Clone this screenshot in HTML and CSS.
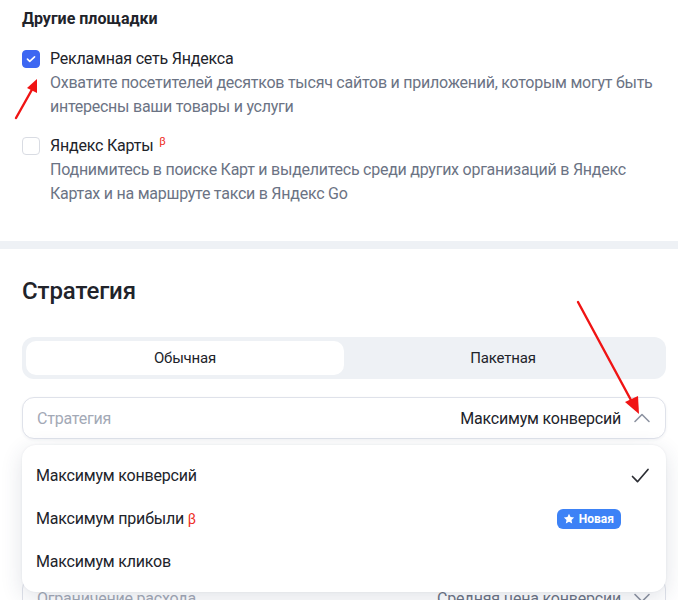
FILE: index.html
```html
<!DOCTYPE html>
<html lang="ru">
<head>
<meta charset="utf-8">
<title>Стратегия</title>
<link rel="stylesheet" href="styles.css">
</head>
<body>
<div class="page">
  <section class="placements">
    <h3 class="placements-title">Другие площадки</h3>
    <div class="option-list">
      <label class="option">
        <span class="checkbox checkbox-on">
          <svg viewBox="0 0 18 18" width="18" height="18"><path d="M5 9.2l2.6 2.5L13 6.6" fill="none" stroke="#fff" stroke-width="1.8" stroke-linecap="round" stroke-linejoin="round"/></svg>
        </span>
        <span class="option-body">
          <span class="option-name">Рекламная сеть Яндекса</span>
          <span class="option-desc">Охватите посетителей десятков тысяч сайтов и приложений, которым могут быть интересны ваши товары и услуги</span>
        </span>
      </label>
      <label class="option">
        <span class="checkbox"></span>
        <span class="option-body">
          <span class="option-name">Яндекс Карты <sup class="beta">β</sup></span>
          <span class="option-desc">Поднимитесь в поиске Карт и выделитесь среди других организаций в Яндекс Картах и на маршруте такси в Яндекс Go</span>
        </span>
      </label>
    </div>
  </section>

  <div class="band"></div>

  <section class="strategy">
    <h2 class="strategy-title">Стратегия</h2>
    <div class="segmented">
      <div class="segment segment-active">Обычная</div>
      <div class="segment">Пакетная</div>
    </div>

    <div class="fields">
      <div class="select-wrap">
        <div class="select select-open">
          <span class="select-label">Стратегия</span>
          <span class="select-value">Максимум конверсий</span>
          <svg class="chevron" viewBox="0 0 18 18" width="18" height="18"><path d="M2 12.5L9 5.5l7 7" fill="none" stroke="#8d93a1" stroke-width="1.6" stroke-linecap="round" stroke-linejoin="round"/></svg>
        </div>
        <ul class="menu">
          <li class="menu-item">
            <span>Максимум конверсий</span>
            <svg class="check" viewBox="0 0 20 20" width="20" height="20"><path d="M2.5 10.5l5 5.2L18 3.5" fill="none" stroke="#2b2d33" stroke-width="1.7" stroke-linecap="round" stroke-linejoin="round"/></svg>
          </li>
          <li class="menu-item">
            <span>Максимум прибыли <span class="beta-inline">β</span></span>
            <span class="badge">
              <svg viewBox="0 0 12 12" width="12" height="12"><path d="M6 .8l1.55 3.3 3.6.42-2.66 2.47.7 3.56L6 8.78 2.81 10.55l.7-3.56L.85 4.52l3.6-.42z" fill="#fff"/></svg>
              Новая
            </span>
          </li>
          <li class="menu-item">
            <span>Максимум кликов</span>
          </li>
        </ul>
      </div>
      <div class="select select-muted">
        <span class="select-label">Ограничение расхода</span>
        <span class="select-value">Средняя цена конверсии</span>
        <svg class="chevron" viewBox="0 0 18 18" width="18" height="18"><path d="M2 5.5l7 7 7-7" fill="none" stroke="#8d93a1" stroke-width="1.6" stroke-linecap="round" stroke-linejoin="round"/></svg>
      </div>
    </div>
  </section>

  <!-- annotation arrows drawn over the form -->
  <svg class="pointer pointer-left" viewBox="0 0 40 50" width="40" height="50">
    <path d="M6 46L24 14" stroke="#f01414" stroke-width="2.4" stroke-linecap="round"/>
    <path d="M27 7L17 16l10 5z" fill="#f01414"/>
  </svg>
  <svg class="pointer pointer-right" viewBox="0 0 80 120" width="80" height="120">
    <path d="M8 4L62 104" stroke="#f01414" stroke-width="2.4" stroke-linecap="round"/>
    <path d="M69 116L55 104l13-6z" fill="#f01414"/>
  </svg>
</div>
</body>
</html>
```

FILE: styles.css
```css
* {
  box-sizing: border-box;
}

html, body {
  margin: 0;
  padding: 0;
  background: #fff;
}

body {
  font-family: Roboto, "Noto Sans", "Liberation Sans", sans-serif;
  color: #21232a;
  letter-spacing: -0.2px;
  overflow: hidden;
}

.page {
  position: relative;
  width: 678px;
  height: 600px;
  overflow: hidden;
}

/* ---- other placements ---- */
.placements {
  padding: 9px 22px 35px;
}

.placements-title {
  margin: 0;
  font-size: 16px;
  line-height: 20px;
  font-weight: 700;
  letter-spacing: 0;
  color: #21232a;
}

.option-list {
  display: flex;
  flex-direction: column;
  gap: 14px;
  margin-top: 17px;
}

.option {
  display: flex;
  gap: 10px;
  align-items: flex-start;
}

.checkbox {
  flex: none;
  width: 18px;
  height: 18px;
  margin-top: 4px;
  border-radius: 4px;
  border: 1px solid #d9dce3;
  background: #fff;
  display: flex;
  align-items: center;
  justify-content: center;
}

.checkbox-on {
  background: #3d67f2;
  border-color: #3d67f2;
}

.checkbox-on svg {
  display: block;
}

.option-body {
  display: flex;
  flex-direction: column;
  padding-top: 1px;
}

.option-name {
  font-size: 16px;
  line-height: 24px;
  color: #21232a;
}

.option-desc {
  font-size: 16px;
  line-height: 24px;
  letter-spacing: -0.25px;
  color: #6b7384;
}

.beta {
  color: #ee2a22;
  font-size: 11px;
  vertical-align: 6px;
  line-height: 0;
  margin-left: 2px;
}

/* ---- grey divider ---- */
.band {
  height: 8px;
  background: #eef1f5;
}

/* ---- strategy ---- */
.strategy {
  padding: 28px 12px 0 22px;
}

.strategy-title {
  margin: 0 0 32px;
  font-size: 24px;
  line-height: 28px;
  font-weight: 500;
  letter-spacing: -0.1px;
  color: #21232a;
}

.segmented {
  display: grid;
  grid-template-columns: 1fr 1fr;
  padding: 4px;
  height: 42px;
  border-radius: 12px;
  background: #eef1f5;
}

.segment {
  display: flex;
  align-items: center;
  justify-content: center;
  border-radius: 10px;
  font-size: 15px;
  color: #21232a;
}

.segment-active {
  background: #fff;
}

.fields {
  display: flex;
  flex-direction: column;
  gap: 138px;
  margin-top: 18px;
}

.select-wrap {
  position: relative;
}

.select {
  display: flex;
  align-items: center;
  height: 42px;
  padding: 0 14px;
  border: 1px solid #dfe2ea;
  border-radius: 12px;
  font-size: 16px;
  background: #fff;
}

.select-open {
  box-shadow: 0 1px 3px rgba(40, 50, 80, 0.06);
}

.select-label {
  flex: 1;
  color: #a3a9b6;
}

.select-value {
  color: #21232a;
  margin-right: 12px;
}

.chevron {
  flex: none;
  display: block;
}

.select-muted {
  color: #a3a9b6;
}

.select-muted .select-value {
  color: #6b7384;
}

/* ---- dropdown ---- */
.menu {
  position: absolute;
  z-index: 2;
  left: 0;
  right: 0;
  top: 48px;
  margin: 0;
  padding: 9px 0 9px;
  list-style: none;
  background: #fff;
  border-radius: 14px;
  box-shadow: 0 6px 22px rgba(40, 55, 90, 0.14), 0 0 2px rgba(40, 55, 90, 0.08);
}

.menu-item {
  display: flex;
  align-items: center;
  justify-content: space-between;
  height: 43px;
  padding: 0 16px 0 14px;
  font-size: 16px;
  color: #21232a;
}

.check {
  display: block;
}

.beta-inline {
  color: #ee2a22;
  font-size: 14px;
}

.badge {
  display: inline-flex;
  align-items: center;
  gap: 4px;
  height: 20px;
  margin-right: 29px;
  padding: 0 7px 0 6px;
  border-radius: 6px;
  background: #3d82f6;
  color: #fff;
  font-size: 12px;
  font-weight: 700;
  letter-spacing: 0;
}

.badge svg {
  display: block;
}

/* ---- annotation arrows ---- */
.pointer {
  position: absolute;
  z-index: 5;
  pointer-events: none;
}

.pointer-left {
  left: 10px;
  top: 72px;
}

.pointer-right {
  left: 570px;
  top: 298px;
}
```
